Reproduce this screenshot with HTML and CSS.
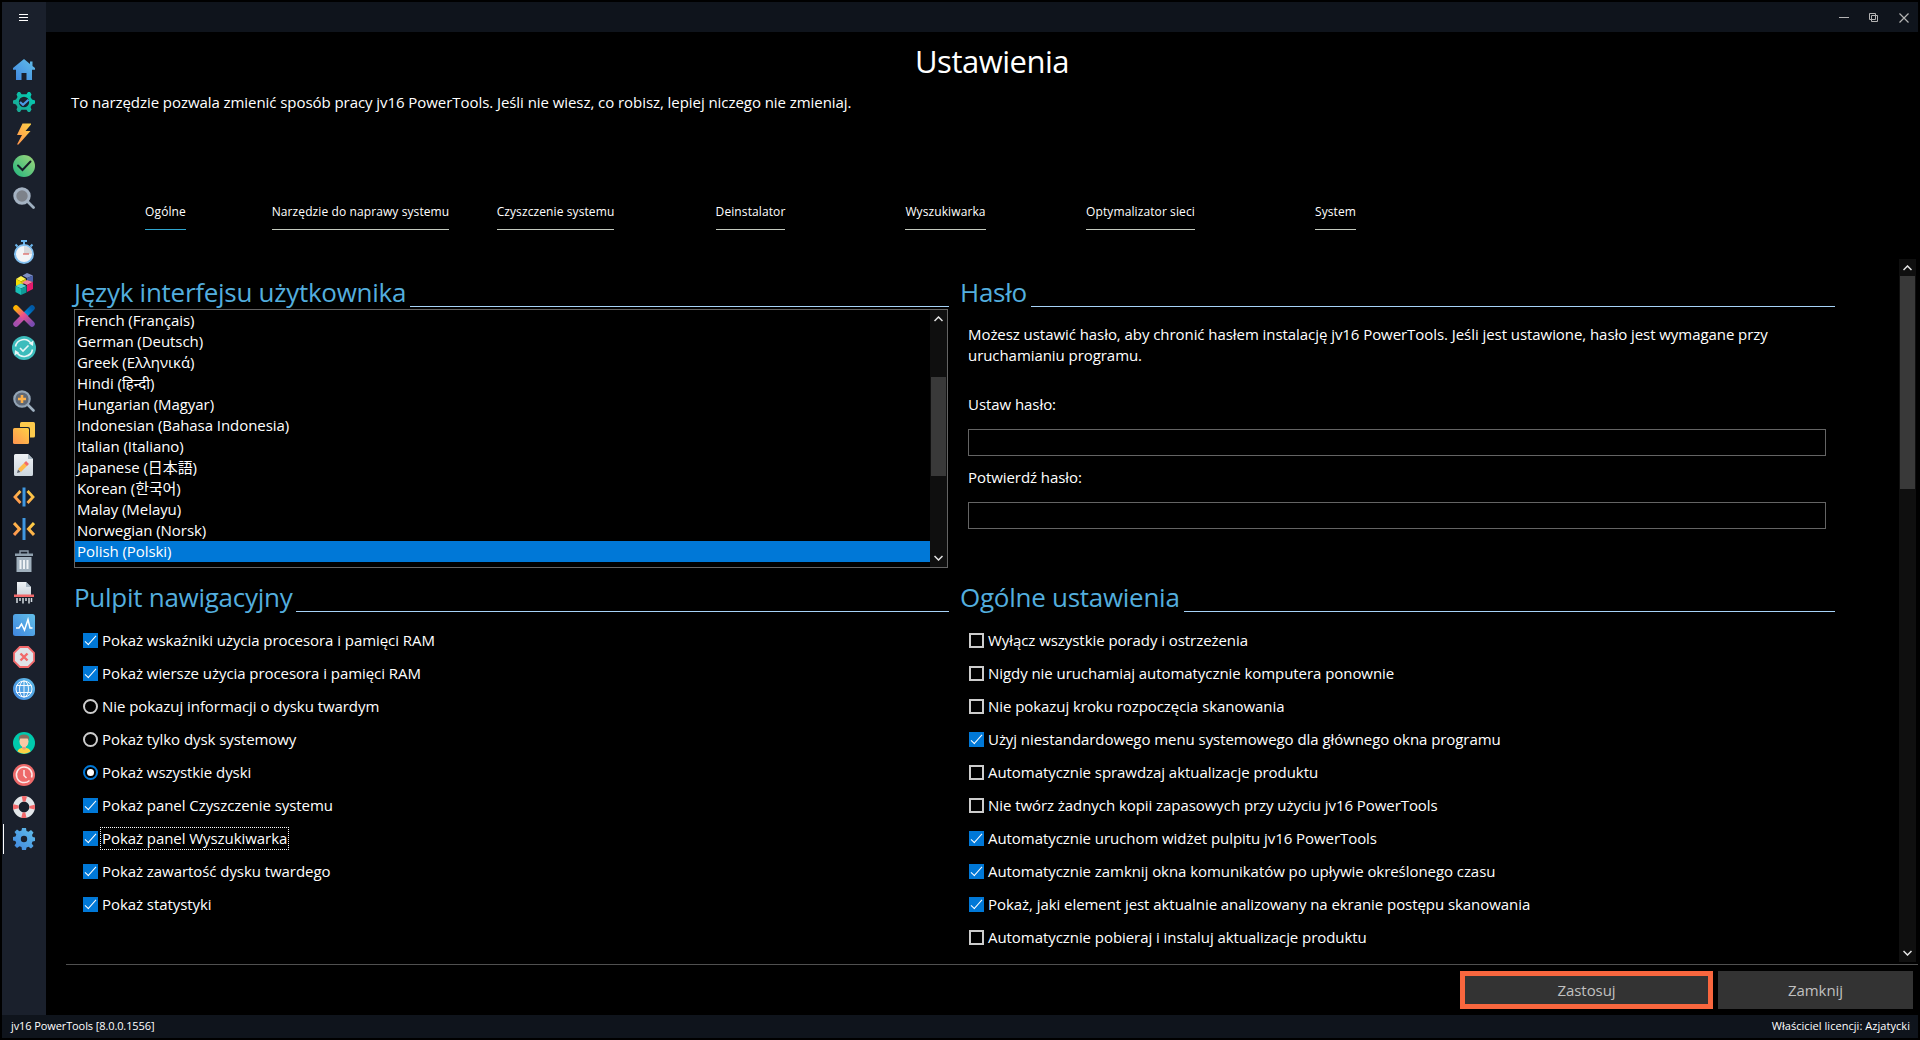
FILE: index.html
```
<!DOCTYPE html>
<html lang="pl">
  <head>
    <meta charset="UTF-8" />
    <title>Ustawienia - jv16 PowerTools</title>
    <meta name="viewport" content="width=device-width, initial-scale=1.0" />
    <link rel="stylesheet" href="styles.css">
  </head>
  <body>
    <!-- shared gradients -->
    <svg class="defs" width="0" height="0">
      <defs>
        <linearGradient id="blue" x1="1" y1="0" x2="0" y2="1">
          <stop offset="0" stop-color="#62bfe8" />
          <stop offset="1" stop-color="#3f86e0" />
        </linearGradient>
        <linearGradient id="teal" x1="0" y1="1" x2="1" y2="0">
          <stop offset="0" stop-color="#1fa08c" />
          <stop offset="1" stop-color="#00d2b8" />
        </linearGradient>
        <linearGradient id="orange" x1="0" y1="1" x2="1" y2="0">
          <stop offset="0" stop-color="#ff944f" />
          <stop offset="1" stop-color="#fdd145" />
        </linearGradient>
        <linearGradient id="green" x1="0" y1="1" x2="1" y2="0">
          <stop offset="0" stop-color="#1fb57f" />
          <stop offset="1" stop-color="#a3d77a" />
        </linearGradient>
        <linearGradient id="paper" x1="0" y1="0" x2="0" y2="1">
          <stop offset="0" stop-color="#eef1f4" />
          <stop offset="1" stop-color="#cdd6de" />
        </linearGradient>
        <linearGradient id="cross" x1="0" y1="0" x2="1" y2="1">
          <stop offset="0" stop-color="#ffb400" />
          <stop offset="0.45" stop-color="#ec4f8e" />
          <stop offset="1" stop-color="#7a4bb0" />
        </linearGradient>
        <linearGradient id="cross2" x1="1" y1="0" x2="0" y2="1">
          <stop offset="0" stop-color="#0059a6" />
          <stop offset="0.35" stop-color="#0086d0" />
          <stop offset="0.42" stop-color="#e5529a" />
          <stop offset="1" stop-color="#a24fae" />
        </linearGradient>
      </defs>
    </svg>

    <div class="window">
      <aside class="sidebar">
        <button class="menu-button" aria-label="Menu">
          <svg width="10" height="8" viewBox="0 0 10 8"><path d="M0 .5h9M0 3.5h9M0 6.5h9" stroke="#fff" /></svg>
        </button>
        <nav class="nav">
          <div class="nav-group">
            <a class="nav-item"><svg viewBox="0 0 22 22"><path fill="url(#blue)" d="M11 0 0 9v1.800h3V21h5.500v-7h5v7H19V10.800h3V9l-2.500-2V2.500H17V5z" /></svg></a>
            <a class="nav-item"><svg viewBox="0 0 22 22"><path fill="url(#teal)" fill-rule="evenodd" d="M8.500 3.200 7 1H5L3.500 3.500 4.500 6 3 8.500 0 9.500v3l3 1L4.500 16l-1 2.500L5 21h2l1.500-2.200h5L15 21h2l1.500-2.500-1-2.500L19 13.500l3-1v-3l-3-1L17.500 6l1-2.500L17 1h-2l-1.500 2.200zM11 5.800a5.200 5.200 0 1 1 0 10.400 5.200 5.200 0 0 1 0-10.400z" /><path d="m7 11 3 2.800 5.500-5" fill="none" stroke="#4a9be6" stroke-width="2.200" /></svg></a>
            <a class="nav-item"><svg viewBox="0 0 22 22"><path fill="url(#orange)" d="M9.500.5 4 12h5L4 21.500h1.500L17.500 8h-5L18 1.500V.5z" /></svg></a>
            <a class="nav-item"><svg viewBox="0 0 22 22"><circle cx="11" cy="11" r="11" fill="url(#green)" /><path d="m5 10.500 4.500 4.500 8-8.500" fill="none" stroke="#161d29" stroke-width="2" stroke-linecap="round" /></svg></a>
            <a class="nav-item"><svg viewBox="0 0 22 22"><path d="m14 14 6.500 6.500" stroke="#9fb0c0" stroke-width="2.800" stroke-linecap="round" /><circle cx="9" cy="9" r="7.200" fill="#7d828a" stroke="#a4b2c2" stroke-width="3" /></svg></a>
          </div>
          <div class="nav-group">
            <a class="nav-item nav-item-wide"><svg viewBox="0 0 22 24"><path d="M8 1h6M11 1v4M2.500 4.500l2 2M19.500 4.500l-2 2" stroke="#6bb5ec" stroke-width="2" /><circle cx="11" cy="14" r="9" fill="#f3f4f6" stroke="#82c0f0" stroke-width="2" /><path d="M11 14V6a8 8 0 0 1 8 8z" fill="#d6d8db" /><path d="M10 14h6" stroke="#e0605a" stroke-width="1.200" /></svg></a>
            <a class="nav-item"><svg viewBox="0 0 22 22">
              <path fill="#7d8fc4" d="m14 0-4.500 2.500L14 5l6-2.500z" /><path fill="#4d62a8" d="m14 5 6-2.500v6.500l-6-2z" />
              <path fill="#fff24d" d="M8 3 3 6l5 2.500L13 6z" /><path fill="#f2dc00" d="M3 6v7l5-2V8.500z" /><path fill="#d6c400" d="m8 8.500 5-2.500v3L8 12z" />
              <path fill="#f47f9d" d="m9 9.500 5-2.500 6 2-6 3z" /><path fill="#e6196d" d="m14 12 6-3v7l-6 3z" />
              <path fill="#5fd6cf" d="m2.500 13 5.500-2.500 5.500 2.500L8 15.500z" /><path fill="#18bfb6" d="M2.500 13v6L8 22v-6.500z" /><path fill="#0f9a97" d="m8 15.500 5.500-2.500v6.500L8 22z" />
            </svg></a>
            <a class="nav-item"><svg viewBox="0 0 22 22"><path d="M19 3 3 19" stroke="url(#cross2)" stroke-width="5.500" stroke-linecap="round" /><path d="m3 3 16 16" stroke="url(#cross)" stroke-width="5.500" stroke-linecap="round" /></svg></a>
            <a class="nav-item nav-item-wide"><svg viewBox="0 0 24 24"><circle cx="12" cy="12" r="12" fill="#3cbcbc" /><path d="M3.500 10.500A8.500 8.500 0 0 1 19 7.500M20.500 13.500A8.500 8.500 0 0 1 5 16.500" fill="none" stroke="#e8f6f6" stroke-width="1.600" /><path d="m21.500 4.500-.5 5.500-4-2.500zM2.500 19.500 3 14l4 2.500z" fill="#e8f6f6" /><path d="m8 12 3 3 5.500-5.500" fill="none" stroke="#e8f6f6" stroke-width="1.600" /></svg></a>
          </div>
          <div class="nav-group">
            <a class="nav-item"><svg viewBox="0 0 22 22"><path d="m14 14 6.500 6.500" stroke="#9fb0c0" stroke-width="2.600" stroke-linecap="round" /><circle cx="9" cy="9" r="7.700" fill="#5f6875" stroke="#93a4b5" stroke-width="2.200" /><path d="M9 5v8M5 9h8" stroke="#fdb04a" stroke-width="2.600" /></svg></a>
            <a class="nav-item"><svg viewBox="0 0 22 22"><rect x="7" y="0" width="15" height="15.500" rx="1.500" fill="#fdca4c" /><rect x="-1" y="5" width="18" height="18" rx="2" fill="#1a202c" /><rect x="0" y="6" width="16" height="16" rx="1.500" fill="url(#orange)" /></svg></a>
            <a class="nav-item"><svg viewBox="0 0 22 22"><path fill="url(#paper)" d="M2.500 0H15l5 5v15.500a1.500 1.500 0 0 1-1.500 1.500h-16A1.500 1.500 0 0 1 1 20.500v-19A1.500 1.500 0 0 1 2.500 0z" /><path fill="#a9b8c4" d="M15 0v5h5z" /><path d="M6.500 16.500 13 10" stroke="#fdb94a" stroke-width="4" /><path d="m12.500 10.500 2-2" stroke="#f2696b" stroke-width="4" /><path fill="#5b5f68" d="m4 19 1-3.500L7.500 18z" /></svg></a>
            <a class="nav-item"><svg viewBox="0 0 22 22"><path d="M7.500 5 2 11l5.500 6M14.500 5l5.500 6-5.500 6" fill="none" stroke="url(#orange)" stroke-width="2.800" /><path d="M11 1.500v19" stroke="#3f97e0" stroke-width="3" /></svg></a>
            <a class="nav-item"><svg viewBox="0 0 22 22"><path d="m1 5 5.500 6L1 17M21 5l-5.500 6 5.500 6" fill="none" stroke="url(#orange)" stroke-width="3" /><path d="M11 0v22" stroke="#3f97e0" stroke-width="3" /></svg></a>
            <a class="nav-item"><svg viewBox="0 0 22 22"><path d="M7 4V1h8v3" fill="none" stroke="#8d9caa" stroke-width="1.400" /><path fill="#8fa0ae" d="M2 3.500h18V6H2z" /><path fill="#a0b0bd" d="M3.500 7h15v15h-15z" /><path d="M7.500 10v9M11 10v9M14.500 10v9" stroke="#eef2f5" stroke-width="2" /></svg></a>
            <a class="nav-item"><svg viewBox="0 0 22 22"><path fill="url(#paper)" d="M4 0h9l5 5v8H4z" /><path fill="#a9b8c4" d="M13 0v5h5z" /><path fill="#f2696b" d="M1 12.500h20V15H1z" /><path d="M4 16v5M7 16v3M10 16v5.500M13 16v3M16 16v5.500M18.500 16v4" stroke="#d5dbe1" stroke-width="1.500" /></svg></a>
            <a class="nav-item"><svg viewBox="0 0 22 22"><rect width="22" height="22" rx="2.500" fill="url(#blue)" /><path d="M3 14h3l2.500-4 3 6L15 5.500l2 8.500h2.500" fill="none" stroke="#fff" stroke-width="1.500" /></svg></a>
            <a class="nav-item"><svg viewBox="0 0 22 22"><path d="M6.800 1h8.400L21 6.800v8.400L15.200 21H6.800L1 15.200V6.800z" fill="#dfe4e9" stroke="#f2696b" stroke-width="1.800" /><path d="m7.500 7.500 7 7m0-7-7 7" stroke="#f2696b" stroke-width="2.400" /></svg></a>
            <a class="nav-item"><svg viewBox="0 0 22 22"><circle cx="11" cy="11" r="11" fill="url(#blue)" /><g fill="none" stroke="#f4f9fd" stroke-width="1"><circle cx="11" cy="11" r="8" /><ellipse cx="11" cy="11" rx="4.500" ry="8" /><path d="M11 3v16M3.500 7.500h15M3.500 14.500h15" /></g></svg></a>
          </div>
          <div class="nav-group">
            <a class="nav-item"><svg viewBox="0 0 22 22"><circle cx="11" cy="11" r="11" fill="#00c9ad" /><path fill="#fdd145" d="M4.500 19.500Q5 16 11 15.500q6 .5 6.500 4a11 11 0 0 1-13 0z" /><path fill="#e3a284" d="M9 13h4v3.500l-2 1.500-2-1.500z" /><ellipse cx="11" cy="9.500" rx="4.500" ry="5.500" fill="#f8c9a6" /><path fill="#8a6d5c" d="M5.800 9V6Q6 2.500 11 2.500T16.200 6v3L15 6.500H7z" /></svg></a>
            <a class="nav-item"><svg viewBox="0 0 22 22"><circle cx="11" cy="11" r="11" fill="#ee6a6a" /><path d="M16.500 16.500a7.800 7.800 0 1 1 2-3" fill="none" stroke="#fbe9e9" stroke-width="1.500" /><path d="M11 6v5.500l2.500 2.500" fill="none" stroke="#fbe9e9" stroke-width="1.500" /></svg></a>
            <a class="nav-item"><svg viewBox="0 0 22 22"><circle cx="11" cy="11" r="8.200" fill="none" stroke="#e3e7ea" stroke-width="5.600" /><circle cx="11" cy="11" r="8.200" fill="none" stroke="#f2696b" stroke-width="5.600" stroke-dasharray="4 8.880" stroke-dashoffset="2" /></svg></a>
            <a class="nav-item active"><svg viewBox="0 0 22 22"><path fill="url(#blue)" fill-rule="evenodd" d="M9 0h4l.5 3 2 .8 2.500-1.800 2.500 2.500-1.500 2.500.7 2 2.800.5v3.500l-3 .6-.8 2 1.800 2.400-2.500 2.500-2.500-1.700-2 .8L13 22H9l-.5-2.900-2-.8L4 20l-2.500-2.500 1.700-2.400-.8-2L0 12.500V9l2.500-.5.8-2L1.500 4 4 1.500l2.500 1.800 2-.8zM11 7.800a3.200 3.200 0 1 0 0 6.400 3.200 3.200 0 0 0 0-6.400z" /></svg></a>
          </div>
        </nav>
      </aside>

      <div class="main">
        <header class="titlebar">
          <svg width="10" height="10" viewBox="0 0 10 10"><path d="M0 4.500h10" stroke="#b4b4b4" /></svg>
          <svg width="10" height="10" viewBox="0 0 10 10"><path d="M.5.500h6v6h-6zM2.500 2.500h6v6h-6z" fill="none" stroke="#b4b4b4" /></svg>
          <svg width="10" height="10" viewBox="0 0 10 10"><path d="m.5.500 9 9m0-9-9 9" stroke="#b4b4b4" stroke-width="1.200" /></svg>
        </header>

        <div class="page">
          <h1>Ustawienia</h1>
          <p class="intro">To narzędzie pozwala zmienić sposób pracy jv16 PowerTools. Jeśli nie wiesz, co robisz, lepiej niczego nie zmieniaj.</p>

          <div class="tabs">
            <a class="tab selected"><span>Ogólne</span></a>
            <a class="tab"><span>Narzędzie do naprawy systemu</span></a>
            <a class="tab"><span>Czyszczenie systemu</span></a>
            <a class="tab"><span>Deinstalator</span></a>
            <a class="tab"><span>Wyszukiwarka</span></a>
            <a class="tab"><span>Optymalizator sieci</span></a>
            <a class="tab"><span>System</span></a>
          </div>

          <div class="settings">
            <div class="columns">
              <section class="panel language">
                <h2><span>Język interfejsu użytkownika</span></h2>
                <div class="listbox">
                  <ul>
                    <li>French (Français)</li>
                    <li>German (Deutsch)</li>
                    <li>Greek (Ελληνικά)</li>
                    <li>Hindi (हिन्दी)</li>
                    <li>Hungarian (Magyar)</li>
                    <li>Indonesian (Bahasa Indonesia)</li>
                    <li>Italian (Italiano)</li>
                    <li>Japanese (日本語)</li>
                    <li>Korean (한국어)</li>
                    <li>Malay (Melayu)</li>
                    <li>Norwegian (Norsk)</li>
                    <li class="selected">Polish (Polski)</li>
                  </ul>
                  <div class="scrollbar">
                    <svg width="9" height="6" viewBox="0 0 9 6"><path d="m.5 5 4-4 4 4" /></svg>
                    <div class="thumb"></div>
                    <svg width="9" height="6" viewBox="0 0 9 6"><path d="m.5 1 4 4 4-4" /></svg>
                  </div>
                </div>
              </section>

              <section class="panel password">
                <h2><span>Hasło</span></h2>
                <p>Możesz ustawić hasło, aby chronić hasłem instalację jv16 PowerTools. Jeśli jest ustawione, hasło jest wymagane przy uruchamianiu programu.</p>
                <label for="password">Ustaw hasło:</label>
                <input type="password" id="password" />
                <label for="confirm">Potwierdź hasło:</label>
                <input type="password" id="confirm" />
              </section>

              <section class="panel options">
                <h2><span>Pulpit nawigacyjny</span></h2>
                <label><input type="checkbox" checked /><span>Pokaż wskaźniki użycia procesora i pamięci RAM</span></label>
                <label><input type="checkbox" checked /><span>Pokaż wiersze użycia procesora i pamięci RAM</span></label>
                <label><input type="radio" name="disks" /><span>Nie pokazuj informacji o dysku twardym</span></label>
                <label><input type="radio" name="disks" /><span>Pokaż tylko dysk systemowy</span></label>
                <label><input type="radio" name="disks" checked /><span>Pokaż wszystkie dyski</span></label>
                <label><input type="checkbox" checked /><span>Pokaż panel Czyszczenie systemu</span></label>
                <label class="focused"><input type="checkbox" checked /><span>Pokaż panel Wyszukiwarka</span></label>
                <label><input type="checkbox" checked /><span>Pokaż zawartość dysku twardego</span></label>
                <label><input type="checkbox" checked /><span>Pokaż statystyki</span></label>
              </section>

              <section class="panel options">
                <h2><span>Ogólne ustawienia</span></h2>
                <label><input type="checkbox" /><span>Wyłącz wszystkie porady i ostrzeżenia</span></label>
                <label><input type="checkbox" /><span>Nigdy nie uruchamiaj automatycznie komputera ponownie</span></label>
                <label><input type="checkbox" /><span>Nie pokazuj kroku rozpoczęcia skanowania</span></label>
                <label><input type="checkbox" checked /><span>Użyj niestandardowego menu systemowego dla głównego okna programu</span></label>
                <label><input type="checkbox" /><span>Automatycznie sprawdzaj aktualizacje produktu</span></label>
                <label><input type="checkbox" /><span>Nie twórz żadnych kopii zapasowych przy użyciu jv16 PowerTools</span></label>
                <label><input type="checkbox" checked /><span>Automatycznie uruchom widżet pulpitu jv16 PowerTools</span></label>
                <label><input type="checkbox" checked /><span>Automatycznie zamknij okna komunikatów po upływie określonego czasu</span></label>
                <label><input type="checkbox" checked /><span>Pokaż, jaki element jest aktualnie analizowany na ekranie postępu skanowania</span></label>
                <label><input type="checkbox" /><span>Automatycznie pobieraj i instaluj aktualizacje produktu</span></label>
              </section>
            </div>

            <div class="scrollbar page-scrollbar">
              <svg width="9" height="6" viewBox="0 0 9 6"><path d="m.5 5 4-4 4 4" /></svg>
              <div class="thumb"></div>
              <svg width="9" height="6" viewBox="0 0 9 6"><path d="m.5 1 4 4 4-4" /></svg>
            </div>
          </div>

          <div class="actions">
            <button class="apply">Zastosuj</button>
            <button class="close">Zamknij</button>
          </div>
        </div>
      </div>

      <footer class="statusbar">
        <span>jv16 PowerTools [8.0.0.1556]</span>
        <span class="owner">Właściciel licencji: Azjatycki</span>
      </footer>
    </div>
  </body>
</html>
```
FILE: styles.css
```
* {
  box-sizing: border-box;
}

body {
  margin: 0;
  padding: 2px;
  height: 1040px;
  background-color: #000;
  color: #fff;
  font-family: "Open Sans", "Noto Sans", "Noto Sans CJK JP", "Noto Sans CJK KR", sans-serif;
  font-size: 15px;
  letter-spacing: -0.06px;
  line-height: 21px;
  overflow: hidden;
}

.defs {
  position: absolute;
}

h1,
h2,
p,
ul {
  margin: 0;
  padding: 0;
  font-weight: normal;
}

button {
  border: none;
  padding: 0;
  font: inherit;
  letter-spacing: inherit;
}

.window {
  display: grid;
  grid-template-columns: 44px 1fr;
  grid-template-rows: 1013px 23px;
  width: 1916px;
}

/* sidebar */

.sidebar {
  background-color: #1a202c;
}

.menu-button {
  display: flex;
  align-items: center;
  justify-content: center;
  width: 44px;
  height: 31px;
  background: none;
}

.nav {
  display: flex;
  flex-direction: column;
  gap: 22px;
  padding-top: 21px;
}

.nav-group:nth-child(n + 3) {
  margin-top: -1px;
}

.nav-group:nth-child(4) {
  margin-top: 0;
}

.nav-item {
  display: flex;
  align-items: center;
  justify-content: center;
  height: 32px;
}

.nav-item svg {
  width: 22px;
  height: 22px;
}

.nav-item-wide svg {
  width: 24px;
  height: 24px;
}

.nav-item.active {
  background: linear-gradient(#fff, #fff) 1px 1px / 1px 30px no-repeat;
}

/* title bar */

.titlebar {
  display: flex;
  align-items: center;
  justify-content: flex-end;
  gap: 20px;
  height: 30px;
  padding: 2px 9px 0 0;
  background-color: #0f141c;
}

.page {
  padding-left: 20px;
}

h1 {
  padding-top: 8px;
  font-size: 31px;
  letter-spacing: -0.5px;
  line-height: 42px;
  text-align: center;
}

.intro {
  padding: 10px 0 0 5px;
}

/* tabs */

.tabs {
  display: flex;
  margin-top: 90px;
  padding-left: 2px;
  font-size: 12px;
  letter-spacing: 0.1px;
  line-height: 17px;
}

.tab {
  display: flex;
  justify-content: center;
  width: 195px;
}

.tab span {
  padding-bottom: 9px;
  border-bottom: 1px solid #c3c9be;
}

.tab.selected span {
  border-color: #2fa5cd;
}

/* settings area */

.settings {
  display: flex;
  justify-content: space-between;
  height: 705px;
  margin-top: 29px;
}

.columns {
  display: grid;
  grid-template-columns: 875px 875px;
  grid-template-rows: 305px 1fr;
  column-gap: 11px;
  padding: 13px 0 0 8px;
}

h2 {
  display: flex;
  height: 35px;
  color: #53aede;
  font-size: 26px;
  letter-spacing: -0.27px;
  line-height: 40px;
}

h2 span {
  flex: none;
}

h2::after {
  content: "";
  flex: 1;
  height: 34px;
  margin-left: 4px;
  border-bottom: 1px solid #a7d3f8;
}

.listbox {
  display: flex;
  justify-content: space-between;
  width: 874px;
  height: 259px;
  margin-top: 2px;
  border: 1px solid #646464;
}

.listbox ul {
  flex: 1;
  list-style: none;
}

.listbox li {
  height: 21px;
  padding-left: 2px;
}

.listbox li.selected {
  background-color: #0078d7;
}

.scrollbar {
  display: flex;
  flex-direction: column;
  align-items: center;
  width: 17px;
  padding: 6px 1px;
  background-color: #0f0f0f;
}

.scrollbar svg {
  fill: none;
  stroke: #e6e6e6;
  stroke-width: 1.5;
}

.scrollbar .thumb {
  width: 100%;
  height: 99px;
  margin: 55px 0 auto;
  background-color: #393939;
}

.page-scrollbar {
  height: 703px;
  margin-right: 2px;
}

.page-scrollbar .thumb {
  height: 213px;
  margin-top: 5px;
}

/* password */

.password p {
  width: 840px;
  margin: 17px 0 28px 8px;
}

.password label {
  display: block;
  margin-left: 8px;
}

.password input {
  display: block;
  width: 858px;
  height: 27px;
  margin: 14px 0 11px 8px;
  border: 1px solid #646464;
  background-color: #000;
}

/* option rows */

.options label {
  display: flex;
  align-items: center;
  height: 33px;
  padding-left: 9px;
}

.options h2 {
  margin-bottom: 12px;
}

.options input {
  display: grid;
  place-content: center;
  appearance: none;
  width: 15px;
  height: 15px;
  margin: 0 2px 0 0;
  border: 2px solid #ccc;
}

.options input[type="radio"] {
  border-radius: 50%;
}

.options input:checked {
  border-color: #0078d7;
}

.options input[type="checkbox"]:checked {
  background-color: #0078d7;
}

.options input[type="checkbox"]:checked::after {
  content: "";
  width: 4px;
  height: 11px;
  margin-top: -4px;
  border: solid #fff;
  border-width: 0 1.5px 1.5px 0;
  transform: rotate(42deg);
}

.options input[type="radio"]:checked::after {
  content: "";
  width: 7px;
  height: 7px;
  border-radius: 50%;
  background-color: #fff;
}

.options label span {
  height: 23px;
  padding: 0 1px;
  border: 1px solid transparent;
}

.options .focused span {
  border: 1px dotted #fff;
}

/* bottom */

.actions {
  display: flex;
  justify-content: flex-end;
  gap: 5px;
  padding: 6px 5px 6px 0;
  border-top: 1px solid #505050;
}

.actions button {
  width: 195px;
  height: 38px;
  background-color: #333;
  color: #c0c0c0;
}

.actions .apply {
  width: 253px;
  border: 5px solid #f8663e;
}

.statusbar {
  display: flex;
  grid-column: 1 / 3;
  justify-content: space-between;
  padding: 0 8px 0 9px;
  background-color: #0f141c;
  font-size: 11px;
  letter-spacing: -0.1px;
  line-height: 22px;
}

.statusbar .owner {
  letter-spacing: 0.05px;
}
```
